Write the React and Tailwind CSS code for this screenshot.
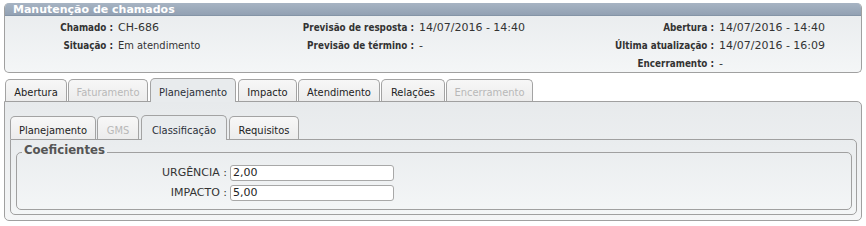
import React from "react";

const sans = { fontFamily: '"DejaVu Sans", Verdana, sans-serif' };
const cond = { fontFamily: '"DejaVu Sans Condensed", "DejaVu Sans", Verdana, sans-serif' };

// valor com dígitos usa DejaVu normal; texto corrido usa a condensada
const Value = ({ children, narrow }) => (
  <div className="whitespace-nowrap pl-[5px] text-[11px] text-[#333]" style={narrow ? cond : sans}>
    {children}
  </div>
);

const Label = ({ children }) => (
  <div className="whitespace-nowrap text-right text-[9.8px] font-bold text-[#333]" style={cond}>
    {children}
  </div>
);

const Tab = ({ label, active, disabled, w, sub }) => {
  let cls = "relative shrink-0 rounded-t-[5px] border border-b-0 border-[#a3a3a3] text-center " + w;
  if (active) {
    cls += sub
      ? " z-10 -mb-px h-[25px] bg-[#e9ecee] pt-[8px]"
      : " z-10 -mb-px h-[24px] bg-[#e8ebed] pt-[7px]";
  } else {
    cls += sub
      ? " mt-[1px] h-[23px] bg-gradient-to-b from-[#f7f7f7] to-[#ececec] pt-[7px]"
      : " mt-[1px] h-[22px] bg-gradient-to-b from-[#f7f7f7] to-[#ececec] pt-[6px]";
  }
  cls += disabled ? " text-[#b8b8b8]" : active ? " text-[#2a2f38]" : " text-[#222]";
  return (
    <div className={cls} style={cond}>
      {label}
    </div>
  );
};

export default function App() {
  return (
    <div className="w-[866px] bg-white pl-[4px] pt-[3px] text-[11px] leading-[14px]" style={sans}>
      {/* cabeçalho do chamado */}
      <div className="h-[70px] w-[858px] overflow-hidden rounded-[5px] border border-t-0 border-[#a0a0a0] bg-gradient-to-b from-[#e8ebed] to-[#f4f6f7]">
        <div className="h-[13px] border-b border-[#8494a6] bg-gradient-to-b from-[#a7b4c3] to-[#92a1b3] pl-[8px] text-[11px] font-bold leading-[13px] text-white">
          Manutenção de chamados
        </div>
        <div className="grid grid-cols-[108px_120px_181px_120px_180px_1fr] items-baseline pt-[3px] leading-[18px]">
          <Label>Chamado :</Label>
          <Value>CH-686</Value>
          <Label>Previsão de resposta :</Label>
          <Value>14/07/2016 - 14:40</Value>
          <Label>Abertura :</Label>
          <Value>14/07/2016 - 14:40</Value>

          <Label>Situação :</Label>
          <Value narrow>Em atendimento</Value>
          <Label>Previsão de término :</Label>
          <Value>-</Value>
          <Label>Última atualização :</Label>
          <Value>14/07/2016 - 16:09</Value>

          <Label />
          <Value />
          <Label />
          <Value />
          <Label>Encerramento :</Label>
          <Value>-</Value>
        </div>
      </div>

      {/* abas principais */}
      <div className="mt-[5px] flex items-start gap-[1px] pl-[1px]">
        <Tab label="Abertura" w="w-[62px]" />
        <Tab label="Faturamento" w="w-[80px]" disabled />
        <div className="mx-[1px] flex">
          <Tab label="Planejamento" w="w-[86px]" active />
        </div>
        <Tab label="Impacto" w="w-[59px]" />
        <Tab label="Atendimento" w="w-[82px]" />
        <Tab label="Relações" w="w-[64px]" />
        <Tab label="Encerramento" w="w-[87px]" disabled />
      </div>
      <div className="h-[120px] w-[858px] rounded-b-[5px] rounded-tr-[5px] border border-[#a0a0a0] bg-gradient-to-b from-[#e7eaec] to-[#f5f6f7] pl-[5px] pr-[4px] pt-[13px]">
        <div className="flex items-start gap-[1px]">
          <Tab label="Planejamento" w="w-[86px]" sub />
          <Tab label="GMS" w="w-[42px]" sub disabled />
          <div className="mx-[1px] flex">
            <Tab label="Classificação" w="w-[86px]" sub active />
          </div>
          <Tab label="Requisitos" w="w-[70px]" sub />
        </div>
        <div className="h-[76px] rounded-b-[5px] rounded-tr-[5px] border border-[#a0a0a0] bg-gradient-to-b from-[#e9ecee] to-[#f4f6f7] pl-[5px] pr-[4px] pt-[3px]">
          <fieldset className="h-[67px] rounded-[5px] border border-[#a0a0a0]">
            <legend className="ml-[5px] px-[2px] pb-[4px] text-[13px] font-bold leading-[14px] text-[#555]" style={cond}>
              Coeficientes
            </legend>
            <div className="flex flex-col gap-[4px] pt-[4px]">
              {[
                ["URGÊNCIA :", "2,00"],
                ["IMPACTO :", "5,00"],
              ].map(([l, v]) => (
                <div key={l} className="flex items-center">
                  <div className="w-[210px] text-right text-[#333]">{l}</div>
                  <div className="ml-[3px] h-[16px] w-[164px] rounded-[3px] border border-[#a8a8a8] bg-white pl-[2px] leading-[14px] text-[#222]">
                    {v}
                  </div>
                </div>
              ))}
            </div>
          </fieldset>
        </div>
      </div>
    </div>
  );
}
